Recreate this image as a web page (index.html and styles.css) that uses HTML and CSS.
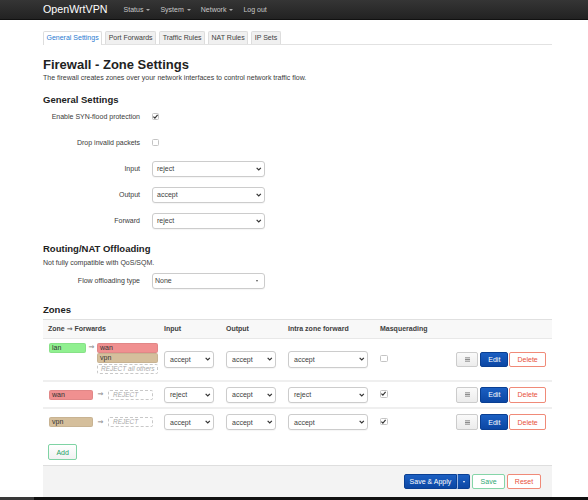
FILE: index.html
```html
<!DOCTYPE html>
<html lang="en">
<head>
<meta charset="utf-8">
<title>Firewall - Zone Settings</title>
<link rel="stylesheet" href="styles.css">
</head>
<body>
<header class="topbar">
  <div class="topbar-inner">
    <span class="brand">OpenWrtVPN</span>
    <nav class="menu">
      <span class="menu-item">Status<i class="caret"></i></span>
      <span class="menu-item">System<i class="caret"></i></span>
      <span class="menu-item">Network<i class="caret"></i></span>
      <span class="menu-item">Log out</span>
    </nav>
  </div>
</header>

<main class="container">
  <ul class="tabs">
    <li class="tab active">General Settings</li>
    <li class="tab">Port Forwards</li>
    <li class="tab">Traffic Rules</li>
    <li class="tab">NAT Rules</li>
    <li class="tab">IP Sets</li>
  </ul>

  <h2 class="page-title">Firewall - Zone Settings</h2>
  <p class="desc">The firewall creates zones over your network interfaces to control network traffic flow.</p>

  <h3 class="section-title sec-general">General Settings</h3>
  <div class="form-row first">
    <label class="form-label">Enable SYN-flood protection</label>
    <span class="cbx"><svg viewBox="0 0 8 8" class="check"><path d="M1.6 4.2 L3.3 5.9 L6.4 2.2"/></svg></span>
  </div>
  <div class="form-row">
    <label class="form-label">Drop invalid packets</label>
    <span class="cbx"></span>
  </div>
  <div class="form-row">
    <label class="form-label">Input</label>
    <div class="select wide">reject<svg viewBox="0 0 6 4" class="chev"><path d="M0.7 0.7 L3 3 L5.3 0.7"/></svg></div>
  </div>
  <div class="form-row">
    <label class="form-label">Output</label>
    <div class="select wide">accept<svg viewBox="0 0 6 4" class="chev"><path d="M0.7 0.7 L3 3 L5.3 0.7"/></svg></div>
  </div>
  <div class="form-row">
    <label class="form-label">Forward</label>
    <div class="select wide">reject<svg viewBox="0 0 6 4" class="chev"><path d="M0.7 0.7 L3 3 L5.3 0.7"/></svg></div>
  </div>

  <h3 class="section-title sec-routing">Routing/NAT Offloading</h3>
  <p class="desc desc-note">Not fully compatible with QoS/SQM.</p>
  <div class="form-row flow">
    <label class="form-label">Flow offloading type</label>
    <div class="select wide flat">None<i class="tri"></i></div>
  </div>

  <h3 class="section-title sec-zones">Zones</h3>
  <div class="ztable">
    <div class="zrow zhead">
      <div class="zc zc-fw">Zone <span class="arr">&rArr;</span> Forwards</div>
      <div class="zc">Input</div>
      <div class="zc">Output</div>
      <div class="zc">Intra zone forward</div>
      <div class="zc">Masquerading</div>
      <div class="zc"></div>
    </div>

    <div class="zrow zr-tall">
      <div class="zc zc-fw">
        <div class="fw multi">
          <span class="zone lan">lan</span>
          <span class="fw-arrow">&rArr;</span>
          <div class="fw-list">
            <span class="zone wan">wan</span>
            <span class="zone vpn">vpn</span>
            <span class="reject">REJECT all others</span>
          </div>
        </div>
      </div>
      <div class="zc"><div class="select">accept<svg viewBox="0 0 6 4" class="chev"><path d="M0.7 0.7 L3 3 L5.3 0.7"/></svg></div></div>
      <div class="zc"><div class="select">accept<svg viewBox="0 0 6 4" class="chev"><path d="M0.7 0.7 L3 3 L5.3 0.7"/></svg></div></div>
      <div class="zc"><div class="select">accept<svg viewBox="0 0 6 4" class="chev"><path d="M0.7 0.7 L3 3 L5.3 0.7"/></svg></div></div>
      <div class="zc"><span class="cbx big"></span></div>
      <div class="zc zc-actions">
        <span class="btn btn-sort"><svg viewBox="0 0 6 5" class="bars"><path d="M0 0.5 H6 M0 2.5 H6 M0 4.5 H6"/></svg></span>
        <span class="btn btn-edit">Edit</span>
        <span class="btn btn-delete">Delete</span>
      </div>
    </div>

    <div class="zrow zr-short">
      <div class="zc zc-fw">
        <div class="fw single">
          <span class="zone wan">wan</span>
          <span class="fw-arrow">&rArr;</span>
          <span class="reject">REJECT</span>
        </div>
      </div>
      <div class="zc"><div class="select">reject<svg viewBox="0 0 6 4" class="chev"><path d="M0.7 0.7 L3 3 L5.3 0.7"/></svg></div></div>
      <div class="zc"><div class="select">accept<svg viewBox="0 0 6 4" class="chev"><path d="M0.7 0.7 L3 3 L5.3 0.7"/></svg></div></div>
      <div class="zc"><div class="select">reject<svg viewBox="0 0 6 4" class="chev"><path d="M0.7 0.7 L3 3 L5.3 0.7"/></svg></div></div>
      <div class="zc"><span class="cbx big"><svg viewBox="0 0 8 8" class="check"><path d="M1.6 4.2 L3.3 5.9 L6.4 2.2"/></svg></span></div>
      <div class="zc zc-actions">
        <span class="btn btn-sort"><svg viewBox="0 0 6 5" class="bars"><path d="M0 0.5 H6 M0 2.5 H6 M0 4.5 H6"/></svg></span>
        <span class="btn btn-edit">Edit</span>
        <span class="btn btn-delete">Delete</span>
      </div>
    </div>

    <div class="zrow zr-short">
      <div class="zc zc-fw">
        <div class="fw single">
          <span class="zone vpn">vpn</span>
          <span class="fw-arrow">&rArr;</span>
          <span class="reject">REJECT</span>
        </div>
      </div>
      <div class="zc"><div class="select">accept<svg viewBox="0 0 6 4" class="chev"><path d="M0.7 0.7 L3 3 L5.3 0.7"/></svg></div></div>
      <div class="zc"><div class="select">accept<svg viewBox="0 0 6 4" class="chev"><path d="M0.7 0.7 L3 3 L5.3 0.7"/></svg></div></div>
      <div class="zc"><div class="select">accept<svg viewBox="0 0 6 4" class="chev"><path d="M0.7 0.7 L3 3 L5.3 0.7"/></svg></div></div>
      <div class="zc"><span class="cbx big"><svg viewBox="0 0 8 8" class="check"><path d="M1.6 4.2 L3.3 5.9 L6.4 2.2"/></svg></span></div>
      <div class="zc zc-actions">
        <span class="btn btn-sort"><svg viewBox="0 0 6 5" class="bars"><path d="M0 0.5 H6 M0 2.5 H6 M0 4.5 H6"/></svg></span>
        <span class="btn btn-edit">Edit</span>
        <span class="btn btn-delete">Delete</span>
      </div>
    </div>
  </div>

  <div class="add-wrap"><span class="btn btn-add">Add</span></div>

  <div class="page-actions">
    <span class="split">
      <span class="btn btn-apply">Save &amp; Apply</span><span class="btn btn-apply-drop"><i class="mini-caret"></i></span>
    </span>
    <span class="btn btn-save">Save</span>
    <span class="btn btn-reset">Reset</span>
  </div>
</main>

<footer class="bottombar"><span class="bottom-left"></span></footer>
</body>
</html>
```

FILE: styles.css
```css
* { box-sizing: border-box; }

html, body {
  margin: 0;
  padding: 0;
  background: #fff;
}

body {
  font-family: "Liberation Sans", Arial, sans-serif;
  font-size: 7px;
  line-height: 9px;
  color: #3a3a3a;
}

/* ---------- top bar ---------- */
.topbar {
  height: 20px;
  background: linear-gradient(#353535, #222);
  border-bottom: 1px solid #111;
}

.topbar-inner {
  display: flex;
  align-items: center;
  height: 19px;
  padding-left: 43px;
}

.brand {
  font-size: 10.7px;
  line-height: 19px;
  color: #fff;
  margin-right: 16px;
}

.menu {
  display: flex;
  align-items: center;
  gap: 10px;
}

.menu-item {
  display: flex;
  align-items: center;
  color: #c8c8c8;
  font-size: 7px;
  line-height: 19px;
}

.caret {
  display: inline-block;
  width: 0;
  height: 0;
  margin-left: 3px;
  margin-top: 1px;
  border-left: 2.5px solid transparent;
  border-right: 2.5px solid transparent;
  border-top: 2.5px solid #aaa;
}

/* ---------- container ---------- */
.container {
  width: 509px;
  margin-left: 43px;
  padding-top: 11px;
}

/* ---------- tabs ---------- */
.tabs {
  list-style: none;
  margin: 0;
  padding: 0;
  display: flex;
  gap: 3px;
  border-bottom: 1px solid #e2e2e2;
}

.tab {
  height: 13px;
  line-height: 12px;
  padding: 0 2.5px;
  border: 1px solid #ddd;
  border-bottom: none;
  border-radius: 2px 2px 0 0;
  background: #f0f0f0;
  color: #404040;
  margin-bottom: -1px;
  white-space: nowrap;
}

.tab.active {
  background: #fff;
  color: #2a7ad0;
  height: 14px;
}

/* ---------- headings ---------- */
.page-title {
  margin: 12px 0 0;
  font-size: 13px;
  line-height: 15px;
  font-weight: bold;
  color: #222;
}

.desc {
  margin: 1px 0 0;
  line-height: 9px;
}

.section-title {
  margin: 0;
  font-size: 9.5px;
  line-height: 11px;
  font-weight: bold;
  color: #222;
}

.sec-general { margin-top: 12px; }
.sec-routing { margin-top: 14px; }
.sec-zones { margin-top: 15px; }

.desc-note { margin-top: 4px; }

/* ---------- form rows ---------- */
.form-row {
  display: flex;
  align-items: center;
  height: 16px;
  margin-top: 10px;
}

.form-row.first { margin-top: 3.5px; }
.form-row.flow { margin-top: 6px; }

.form-label {
  width: 97px;
  text-align: right;
  margin-right: 12px;
}

.cbx {
  display: inline-flex;
  align-items: center;
  justify-content: center;
  width: 6.5px;
  height: 6.5px;
  border: 1px solid #c4c4c4;
  border-radius: 1.5px;
  background: #fff;
}

.cbx.big {
  width: 7.5px;
  height: 7.5px;
}

.check {
  width: 7px;
  height: 7px;
  overflow: visible;
}

.check path {
  fill: none;
  stroke: #333;
  stroke-width: 1.3;
}

/* ---------- selects ---------- */
.select {
  display: flex;
  align-items: center;
  justify-content: space-between;
  width: 100%;
  height: 16.5px;
  padding: 0 3px 0 5px;
  border: 1px solid #ccc;
  border-radius: 3px;
  background: #fff;
  color: #404040;
  box-shadow: 0 1px 1px rgba(0, 0, 0, 0.04);
}

.select.wide {
  width: 113px;
  height: 16px;
  padding-left: 4px;
}

.select.flat {
  padding-left: 2px;
  padding-right: 6px;
}

.chev {
  width: 5.5px;
  height: 4px;
  overflow: visible;
}

.chev path {
  fill: none;
  stroke: #333;
  stroke-width: 1.3;
}

.tri {
  display: inline-block;
  width: 0;
  height: 0;
  border-left: 1.5px solid transparent;
  border-right: 1.5px solid transparent;
  border-top: 2px solid #555;
}

/* ---------- zones table ---------- */
.ztable {
  margin-top: 4px;
}

.zrow {
  display: grid;
  grid-template-columns: 115px 62px 62px 92px 1fr auto;
  align-items: center;
}

.zc {
  padding: 0 6px;
}

.zc-fw {
  padding: 0 5px 0 6px;
}

.zhead {
  height: 20px;
  background: #f8f8f8;
  border-top: 1px solid #e0e0e0;
  border-bottom: 1px solid #e8e8e8;
  font-weight: bold;
  color: #404040;
}

.zhead .zc-fw { padding-left: 5px; }

.arr {
  font-family: "DejaVu Sans", sans-serif;
  font-weight: normal;
  font-size: 7px;
}

.zr-tall {
  height: 41.7px;
}

.zr-short {
  height: 27.3px;
  border-top: 2px solid #efefef;
}

.fw {
  display: grid;
  align-items: start;
}

.fw.multi {
  grid-template-columns: 36.7px 11.3px 1fr;
  margin-top: -2px;
}

.fw.single {
  grid-template-columns: 43.7px 15.3px 1fr;
  align-items: center;
}

.fw-list {
  display: flex;
  flex-direction: column;
  gap: 0.7px;
}

.zone {
  display: block;
  height: 9.5px;
  padding: 0 2px;
  border-radius: 2px;
  border: 1px solid rgba(0, 0, 0, 0.06);
  color: #333;
  line-height: 7.5px;
}

.zone.lan { background: #90f090; }
.zone.wan { background: #f09090; }
.zone.vpn { background: #d5bf9c; height: 10px; line-height: 8px; }

.fw-arrow {
  text-align: center;
  color: #777;
  line-height: 9px;
  font-family: "DejaVu Sans", sans-serif;
  font-size: 7px;
}

.reject {
  display: block;
  height: 9.5px;
  line-height: 7.5px;
  padding: 0 3px;
  border: 1px dashed #c8c8c8;
  border-radius: 2px;
  font-style: italic;
  color: #aaa;
  font-size: 6.5px;
  white-space: nowrap;
}

.fw.single .reject {
  padding-left: 4px;
}

.zc-actions {
  display: flex;
  align-items: center;
  gap: 2px;
  padding-right: 6px;
}

/* ---------- buttons ---------- */
.btn {
  display: inline-flex;
  align-items: center;
  justify-content: center;
  height: 15.7px;
  border-radius: 2px;
  border: 1px solid #ccc;
  white-space: nowrap;
  font-size: 7px;
}

.btn-sort {
  width: 22.3px;
  background: linear-gradient(#fafafa, #ececec);
  border-color: #ccc;
}

.bars {
  width: 5px;
  height: 5px;
  overflow: visible;
}

.bars path {
  fill: none;
  stroke: #666;
  stroke-width: 0.9;
}

.btn-edit {
  width: 28px;
  background: linear-gradient(#1b5fc2, #0c47a4);
  border-color: #0a3f92;
  color: #fff;
}

.btn-delete {
  width: 36.7px;
  margin-left: -1px;
  background: #fff;
  border-color: #f08a78;
  color: #e8503c;
}

.add-wrap {
  margin-top: 9.7px;
  padding-left: 5.3px;
}

.btn-add {
  width: 28.7px;
  height: 15.4px;
  background: linear-gradient(#fff, #f1f1f1);
  border-color: #7fd3a4;
  color: #25a065;
}

.page-actions {
  display: flex;
  justify-content: flex-end;
  align-items: center;
  gap: 2px;
  height: 32px;
  margin-top: 5.3px;
  padding: 0 10.7px 0 0;
  background: #f3f3f3;
  border-top: 1px solid #dedede;
}

.split {
  display: inline-flex;
}

.btn-apply {
  width: 53.4px;
  height: 15px;
  background: linear-gradient(#1b5fc2, #0c47a4);
  border-color: #0a3f92;
  color: #fff;
  border-radius: 2px 0 0 2px;
}

.btn-apply-drop {
  width: 13.3px;
  height: 15px;
  background: linear-gradient(#1b5fc2, #0c47a4);
  border-color: #0a3f92;
  border-left: 1px solid #9db8e4;
  border-radius: 0 2px 2px 0;
}

.mini-caret {
  display: inline-block;
  width: 0;
  height: 0;
  border-left: 1.5px solid transparent;
  border-right: 1.5px solid transparent;
  border-top: 2px solid #fff;
}

.btn-save {
  width: 32.3px;
  height: 15px;
  background: #fff;
  border-color: #85d5a8;
  color: #30a872;
}

.btn-reset {
  width: 34.6px;
  height: 15px;
  background: #fff;
  border-color: #f08a78;
  color: #e8503c;
}

/* ---------- bottom bar ---------- */
.bottombar {
  display: flex;
  height: 20px;
  background: #111;
}

.bottom-left {
  width: 34px;
  background: #3a3a3a;
}
```
